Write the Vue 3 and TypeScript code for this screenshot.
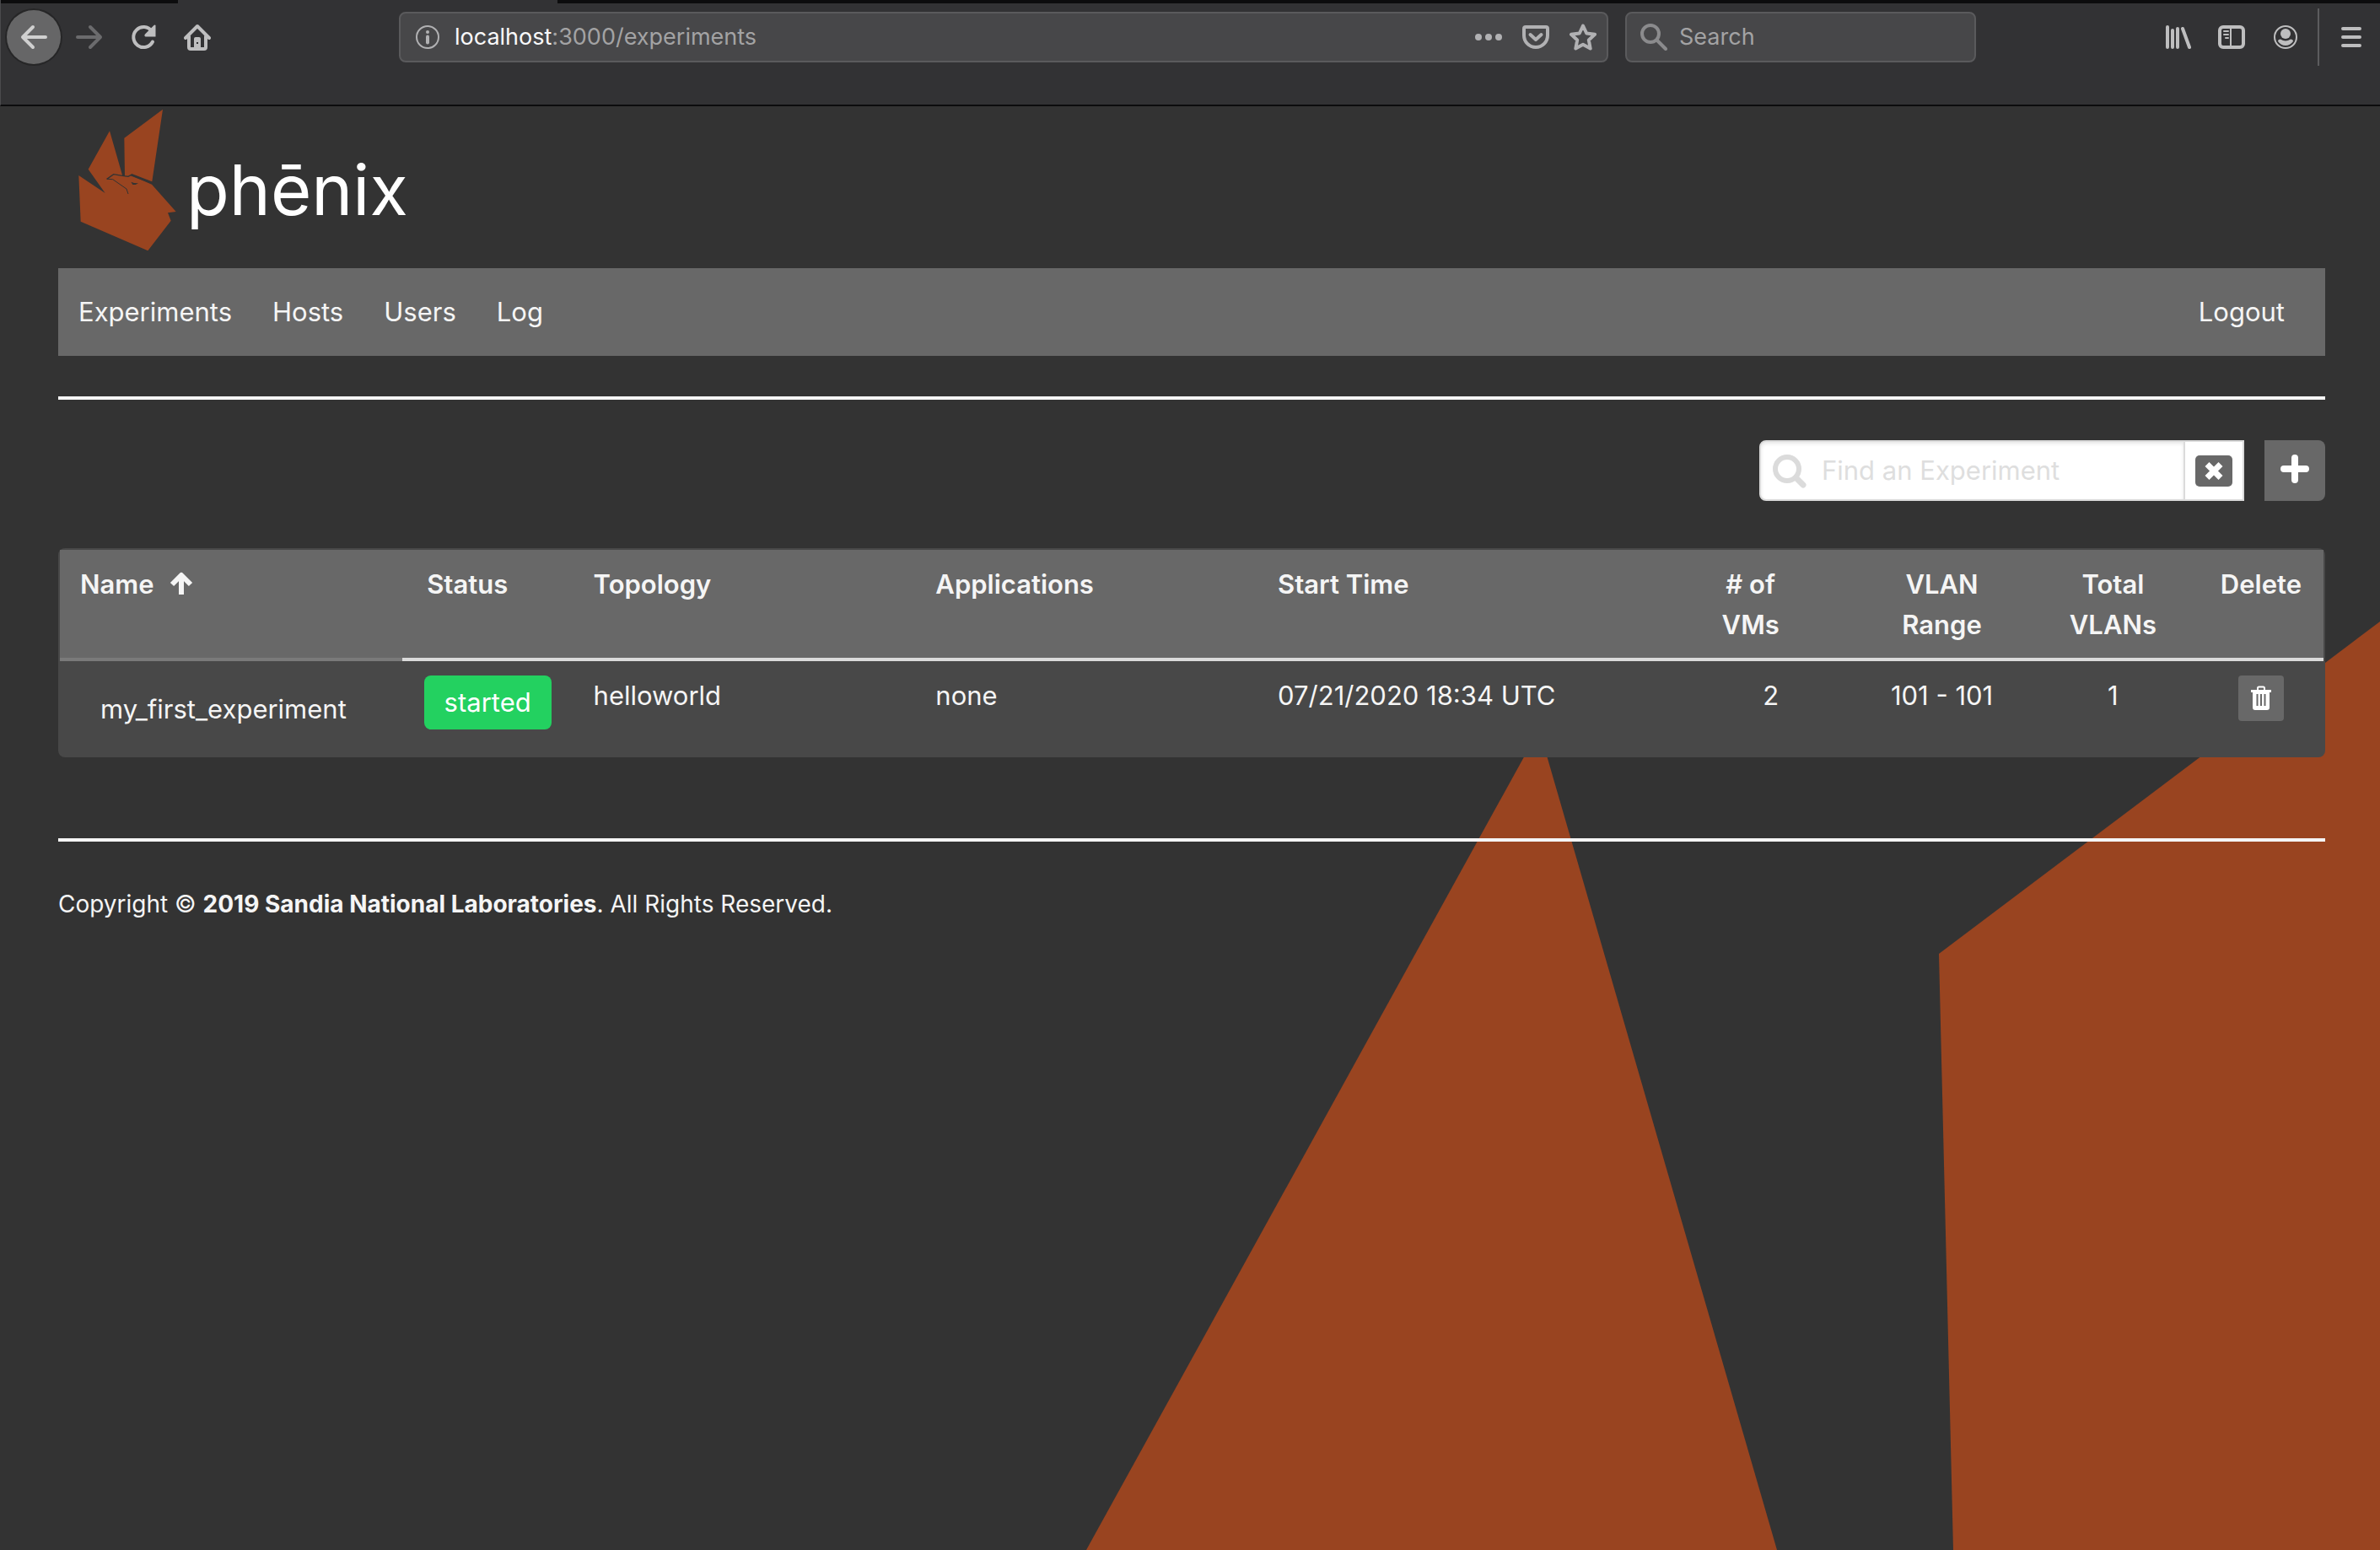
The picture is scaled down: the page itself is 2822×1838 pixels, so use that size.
<script setup lang="ts">
import { computed, ref } from 'vue'

interface Experiment {
  name: string
  status: string
  topology: string
  apps: string
  startTime: string
  vmCount: number
  vlanRange: string
  vlanCount: number
}

interface Column {
  label: string
  units: number
  sortable?: boolean
  sorted?: boolean
  centered?: boolean
}

const columns: Column[] = [
  { label: 'Name', units: 400, sortable: true, sorted: true },
  { label: 'Status', units: 200, sortable: true, centered: true },
  { label: 'Topology', units: 400 },
  { label: 'Applications', units: 400 },
  { label: 'Start Time', units: 500, sortable: true },
  { label: '# of VMs', units: 200, sortable: true, centered: true },
  { label: 'VLAN Range', units: 200, centered: true },
  { label: 'Total VLANs', units: 200, centered: true },
  { label: 'Delete', units: 146, centered: true },
]

const totalUnits = columns.reduce((sum, c) => sum + c.units, 0)
const colWidth = (c: Column): string => `${(c.units / totalUnits) * 100}%`

const experiments = ref<Experiment[]>([
  {
    name: 'my_first_experiment',
    status: 'started',
    topology: 'helloworld',
    apps: 'none',
    startTime: '07/21/2020 18:34 UTC',
    vmCount: 2,
    vlanRange: '101 - 101',
    vlanCount: 1,
  },
])

const filter = ref('')
const webSearch = ref('')
const visible = computed(() => experiments.value.filter((e) => e.name.includes(filter.value)))

function remove(name: string): void {
  experiments.value = experiments.value.filter((e) => e.name !== name)
}
</script>

<template>
  <div class="window">
    <header class="chrome">
      <div class="tabstrip"><div class="tab"></div></div>
      <div class="toolbar">
        <button class="tool back" aria-label="Back">
          <svg width="32" height="32" viewBox="0 0 32 32"><path d="M15 4 3 16l12 12M4 16h26" fill="none" stroke="#d0d0d0" stroke-width="4" stroke-linecap="round" stroke-linejoin="round" /></svg>
        </button>
        <button class="tool forward" aria-label="Forward">
          <svg width="32" height="32" viewBox="0 0 32 32"><path d="M17 4 29 16 17 28M28 16H2" fill="none" stroke="#6b6b6d" stroke-width="4" stroke-linecap="round" stroke-linejoin="round" /></svg>
        </button>
        <button class="tool" aria-label="Reload">
          <svg width="32" height="32" viewBox="0 0 32 32"><path d="M27 21.500A12 12 0 1 1 26 9" fill="none" stroke="#bebebf" stroke-width="4" stroke-linecap="round" /><path d="M30.500 2v13.500H18.500q-2-1-.5-3L28 2.500q1.500-1.500 2.500-.5z" fill="#bebebf" /></svg>
        </button>
        <button class="tool" aria-label="Home">
          <svg width="32" height="32" viewBox="0 0 32 32"><path d="M2 17 16 3l14 14M6 15v13q0 2 2 2h16q2 0 2-2V15" fill="none" stroke="#bebebf" stroke-width="4" stroke-linecap="round" stroke-linejoin="round" /><path d="M12 29V18q0-2 2-2h4q2 0 2 2v11z" fill="#bebebf" /><rect x="15" y="22" width="2" height="2" fill="#323234" /></svg>
        </button>

        <div class="field address">
          <svg width="28" height="28" viewBox="0 0 28 28"><circle cx="14" cy="14" r="13" fill="none" stroke="#b1b1b3" stroke-width="2" /><circle cx="14" cy="8" r="2" fill="#b1b1b3" /><path d="M14 13.500v7" stroke="#b1b1b3" stroke-width="4" stroke-linecap="round" /></svg>
          <span class="url"><span class="host">localhost</span>:3000/experiments</span>
          <span class="field-actions">
            <button class="tool" aria-label="Page actions">
              <svg width="32" height="32" viewBox="0 0 32 32" fill="#b1b1b3"><circle cx="4" cy="16" r="4" /><circle cx="16" cy="16" r="4" /><circle cx="28" cy="16" r="4" /></svg>
            </button>
            <button class="tool" aria-label="Save to Pocket">
              <svg width="32" height="32" viewBox="0 0 32 32" fill="none" stroke="#b1b1b3" stroke-width="4" stroke-linecap="round" stroke-linejoin="round"><path d="M4 4h24q2 0 2 2v8a14 14 0 0 1-28 0V6q0-2 2-2z" /><path d="m9.500 13 6.500 6 6.500-6" /></svg>
            </button>
            <button class="tool" aria-label="Bookmark this page">
              <svg width="32" height="32" viewBox="0 0 32 32"><path d="m16 2.500 4.200 9 9.800 1.300-7.200 6.700 1.900 10L16 24.800l-8.700 4.700 1.900-10L2 12.800l9.800-1.300z" fill="none" stroke="#b1b1b3" stroke-width="4" stroke-linejoin="round" /></svg>
            </button>
          </span>
        </div>

        <div class="field websearch">
          <svg width="32" height="32" viewBox="0 0 32 32" fill="none" stroke="#8b8b8d" stroke-width="4" stroke-linecap="round"><circle cx="12" cy="12" r="10" /><path d="M20 20l10 10" /></svg>
          <input v-model="webSearch" type="text" placeholder="Search" aria-label="Search the web" />
        </div>

        <div class="menu-tools">
          <button class="tool" aria-label="Library">
            <svg width="32" height="32" viewBox="0 0 32 32" stroke="#bebebf" stroke-width="4" stroke-linecap="round"><path d="M4 4v24M10 8v20M16 6v22M22 6l8 22" /></svg>
          </button>
          <button class="tool" aria-label="Sidebars">
            <svg width="32" height="32" viewBox="0 0 32 32" fill="none" stroke="#bebebf"><rect x="2" y="4" width="28" height="24" rx="4" stroke-width="4" /><path d="M15 4v24M7 9h5M7 13h5M9 17h3" stroke-width="2" stroke-linecap="round" /></svg>
          </button>
          <button class="tool" aria-label="Account">
            <svg width="32" height="32" viewBox="0 0 32 32"><circle cx="16" cy="16" r="13" fill="none" stroke="#bebebf" stroke-width="2" /><circle cx="16" cy="12" r="6" fill="#bebebf" /><path d="M10 18.500q6 4 12 0 3 0 3 2.500-3.500 5-9 5t-9-5q0-2.500 3-2.500z" fill="#bebebf" /></svg>
          </button>
        </div>
        <div class="menu-divider"></div>
        <button class="tool menu" aria-label="Open menu">
          <svg width="24" height="32" viewBox="0 0 24 32"><path d="M2 6h20M2 16h20M2 26h20" stroke="#bebebf" stroke-width="4" stroke-linecap="round" /></svg>
        </button>
      </div>
    </header>

    <div class="page">
      <svg class="backdrop" viewBox="0 0 2822 1712" preserveAspectRatio="xMidYMid slice" aria-hidden="true">
        <path d="M1825 739 2107 1712H1288z" fill="#994420" />
        <path d="M2822 611 2299 1005 2316 1712H2822z" fill="#994420" />
      </svg>

      <div class="container">
        <div class="brand">
          <svg width="116" height="170" viewBox="99 57 348 510" aria-hidden="true">
            <path d="M399 59 262 161 264 298 287 294 360 322z" fill="#994420" />
            <path d="M210 136 134 272 194 357 100 294 107 458 346 562 428 455 417 427 446 423 360 326 287 294 256 296z" fill="#994420" />
            <path d="M200 307 224 290 255 295 276 298 287 292 361 320" fill="none" stroke="#333" stroke-width="4" />
            <path d="M287 292 361 320" fill="none" stroke="#333" stroke-width="8" />
            <path d="M200 307 221 308 270 342 276 360" fill="none" stroke="#333" stroke-width="3" />
            <path d="M286 317 297 321 312 322 302 327 292 327z" fill="#333" />
          </svg>
          <span class="wordmark">phēnix</span>
        </div>

        <nav class="navbar">
          <a href="#experiments">Experiments</a>
          <a href="#hosts">Hosts</a>
          <a href="#users">Users</a>
          <a href="#log">Log</a>
          <a class="logout" href="#logout">Logout</a>
        </nav>

        <hr />

        <div class="actions">
          <div class="finder">
            <svg class="finder-icon" width="40" height="40" viewBox="0 0 40 40" fill="none" stroke="#dbdbdb" stroke-linecap="round"><circle cx="17" cy="17" r="14" stroke-width="6" /><path d="M28 28l8 8" stroke-width="7" /></svg>
            <input v-model="filter" type="text" placeholder="Find an Experiment" aria-label="Find an Experiment" />
            <button class="clear" aria-label="Clear filter" @click="filter = ''">
              <svg width="44" height="37" viewBox="0 0 44 37"><rect width="44" height="37" rx="5" fill="#686868" /><path d="M14 10.500l16 16M30 10.500l-16 16" stroke="#fff" stroke-width="7" /></svg>
            </button>
          </div>
          <button class="add" aria-label="Create an experiment">
            <svg width="34" height="38" viewBox="0 0 34 38"><path d="M17 4v26M4 17h26" stroke="#fff" stroke-width="8" stroke-linecap="round" /></svg>
          </button>
        </div>

        <div class="card">
          <table>
            <colgroup>
              <col v-for="c in columns" :key="c.label" :style="{ width: colWidth(c) }" />
            </colgroup>
            <thead>
              <tr>
                <th v-for="c in columns" :key="c.label" :class="{ centered: c.centered, sorted: c.sorted }">
                  <button v-if="c.sortable" class="sort">
                    <span>{{ c.label }}</span>
                    <svg class="arrow" :class="{ on: c.sorted }" width="32" height="32" viewBox="0 0 32 32"><path d="M16 28V6M5 16 16 5l11 11" fill="none" stroke="#f5f5f5" stroke-width="6" stroke-linejoin="round" /></svg>
                  </button>
                  <template v-else>{{ c.label }}</template>
                </th>
              </tr>
            </thead>
            <tbody>
              <tr v-for="e in visible" :key="e.name">
                <td><a class="name" href="#experiment">{{ e.name }}</a></td>
                <td class="centered"><span class="tag">{{ e.status }}</span></td>
                <td>{{ e.topology }}</td>
                <td>{{ e.apps }}</td>
                <td>{{ e.startTime }}</td>
                <td class="centered">{{ e.vmCount }}</td>
                <td class="centered">{{ e.vlanRange }}</td>
                <td class="centered">{{ e.vlanCount }}</td>
                <td class="centered">
                  <button class="delete" aria-label="Delete experiment" @click="remove(e.name)">
                    <svg width="26" height="30" viewBox="0 0 26 30"><path d="M9 5V3q0-1.500 1.500-1.500h5Q17 1.500 17 3v2" fill="none" stroke="#fff" stroke-width="2" /><path d="M1 5h24v3h-2v18q0 3-3 3H6q-3 0-3-3V8H1z" fill="#fff" /><path d="M8.500 10v14M13 10v14M17.500 10v14" stroke="#686868" stroke-width="2" /></svg>
                  </button>
                </td>
              </tr>
            </tbody>
          </table>
        </div>

        <hr class="footer-rule" />
        <footer>Copyright © <strong>2019 Sandia National Laboratories</strong>. All Rights Reserved.</footer>
      </div>
    </div>
  </div>
</template>

<style>
body {
  margin: 0;
  background: #333333;
}
</style>

<style scoped>
.window,
.window * {
  box-sizing: border-box;
}
.window {
  display: flex;
  flex-direction: column;
  min-height: 100vh;
  font-family: Inter, "Liberation Sans", sans-serif;
  font-size: 31px;
  line-height: 48px;
  color: #f5f5f5;
}
button {
  padding: 0;
  border: 0;
  background: none;
  color: inherit;
  font: inherit;
  cursor: pointer;
}
input {
  font: inherit;
}
svg {
  display: block;
  flex: none;
}
a {
  color: inherit;
  text-decoration: none;
}

/* Browser chrome */
.chrome {
  background: #323234;
  border-bottom: 2px solid #0c0c0d;
  padding-bottom: 40px;
  border-left: 1px solid #4a4a4c;
}
.tabstrip {
  height: 4px;
  background: #0c0c0d;
}
.tab {
  width: 450px;
  height: 4px;
  margin-left: 210px;
  background: #323234;
}
.toolbar {
  display: flex;
  align-items: center;
  height: 80px;
  padding: 0 22px 0 7px;
}
.tool {
  margin-right: 32px;
}
.back {
  display: flex;
  align-items: center;
  justify-content: center;
  width: 64px;
  height: 64px;
  margin-right: 18px;
  border-radius: 50%;
  background: #666667;
  box-shadow: 0 0 0 2px #262627;
}
.field {
  display: flex;
  align-items: center;
  height: 60px;
  border: 2px solid #5a5a5c;
  border-radius: 8px;
  background: #474749;
  font-size: 27px;
}
.address {
  flex: 1;
  margin-left: 191px;
  padding: 0 12px 0 18px;
}
.url {
  flex: 1;
  margin-left: 18px;
  color: #a3a3a4;
}
.host {
  color: #f9f9fa;
}
.field-actions {
  display: flex;
  gap: 24px;
}
.field-actions .tool {
  margin: 0;
}
.websearch {
  width: 416px;
  margin-left: 20px;
  padding: 0 16px;
}
.websearch input {
  flex: 1;
  min-width: 0;
  margin-left: 14px;
  padding: 0;
  border: 0;
  outline: 0;
  background: none;
  color: #f9f9fa;
}
.websearch input::placeholder {
  color: #a3a3a4;
  opacity: 1;
}
.menu-tools {
  display: flex;
  margin-left: 223px;
}
.menu-divider {
  width: 2px;
  height: 68px;
  margin-left: -10px;
  background: #5c5c5e;
}
.menu-tools .tool {
  margin-right: 32px;
}
.menu {
  margin: 0 0 0 26px;
}

/* Page */
.page {
  position: relative;
  flex: 1;
  background: #333333;
}
.backdrop {
  position: absolute;
  inset: 0;
  width: 100%;
  height: 100%;
}
.container {
  position: relative;
  padding: 0 65px 0 69px;
}
.brand {
  display: flex;
  height: 192px;
  padding: 3px 0 0 24px;
}
.wordmark {
  margin: 52px 0 0 12px;
  font-size: 83px;
  font-weight: 400;
  line-height: 88px;
  color: #ffffff;
}
.navbar {
  display: flex;
  align-items: center;
  height: 104px;
  padding-right: 24px;
  background: #686868;
}
.navbar a {
  padding: 0 24px;
}
.navbar .logout {
  margin-left: auto;
}
hr {
  height: 4px;
  margin: 48px 0;
  border: 0;
  background: #f5f5f5;
}
.actions {
  display: flex;
  justify-content: flex-end;
  gap: 24px;
  margin-bottom: 56px;
}
.finder {
  position: relative;
  display: flex;
  width: 575px;
  height: 72px;
}
.finder-icon {
  position: absolute;
  left: 16px;
  top: 17px;
}
.finder input {
  flex: 1;
  min-width: 0;
  padding: 0 16px 0 72px;
  border: 2px solid #dbdbdb;
  border-radius: 8px 0 0 8px;
  outline: 0;
  background: #ffffff;
  box-shadow: inset 0 2px 4px rgba(10, 10, 10, 0.1);
  color: #363636;
}
.finder input::placeholder {
  color: #dedede;
  opacity: 1;
}
.clear {
  display: flex;
  align-items: center;
  justify-content: center;
  width: 70px;
  border: 2px solid #dbdbdb;
  border-left: 0;
  background: #ffffff;
}
.add {
  display: flex;
  align-items: center;
  justify-content: center;
  width: 72px;
  height: 72px;
  border-radius: 0 8px 8px 0;
  background: #686868;
}
.card {
  padding: 2px;
  border-radius: 8px;
  background: #484848;
}
table {
  width: 100%;
  table-layout: fixed;
  border-collapse: separate;
  border-spacing: 0;
}
th,
td {
  padding: 17px 24px 15px;
  vertical-align: top;
  text-align: left;
}
th {
  background: #686868;
  border-bottom: 4px solid #dbdbdb;
  font-weight: 600;
}
th.sorted {
  border-color: #7a7a7a;
}
th.centered,
td.centered {
  text-align: center;
}
th:last-child {
  padding-left: 16px;
  padding-right: 16px;
}
.sort {
  display: flex;
  gap: 16px;
  font-weight: 600;
}
.centered .sort {
  justify-content: center;
  width: 100%;
}
.arrow {
  margin-top: 8px;
  visibility: hidden;
}
.arrow.on {
  visibility: visible;
}
.name {
  display: block;
  padding: 16px 24px;
}
.tag {
  display: inline-block;
  height: 64px;
  padding: 0 24px;
  border-radius: 8px;
  background: #23d160;
  color: #ffffff;
  line-height: 64px;
  vertical-align: top;
}
.delete {
  display: inline-flex;
  align-items: center;
  justify-content: center;
  width: 54px;
  height: 54px;
  border-radius: 4px;
  background: #686868;
  vertical-align: top;
}
.footer-rule {
  margin: 96px 0 50px;
}
footer {
  padding-bottom: 48px;
  font-size: 28px;
}
</style>
